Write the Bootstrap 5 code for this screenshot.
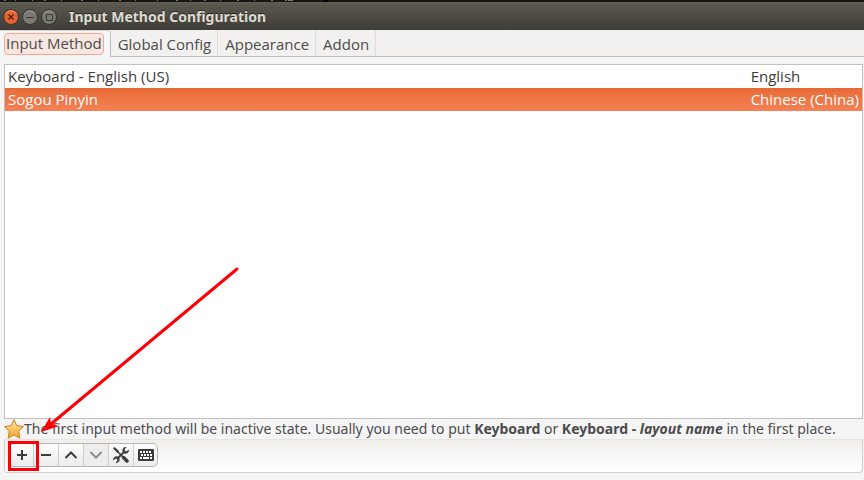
<!DOCTYPE html>
<html lang="en">
<head>
<meta charset="utf-8">
<meta name="viewport" content="width=device-width, initial-scale=1">
<title>Input Method Configuration</title>
<link href="https://cdn.jsdelivr.net/npm/bootstrap@5.3.0/dist/css/bootstrap.min.css" rel="stylesheet">
<style>
body { font-family: "Open Sans", "Noto Sans", sans-serif; font-size: 15px; line-height: 20px; color: #4c4c4c; background: #f5f5f6; }
.backdrop-strip { height: 2px; background: #161616; }
.backdrop-strip svg { display: block; }
.titlebar { height: 28px; padding: 0 3px; background: linear-gradient(#5b584c, #5a574e 2px, #3d3c36); border-top: 1px solid #63604f; }
.titlebar h1 { font-size: 14px; line-height: 20px; color: #dfdbd2; text-shadow: 0 -1px 0 #2a2925; padding-left: 9px; font-family: "Noto Sans", "Open Sans", sans-serif; }
.win-btn { width: 16px; height: 16px; margin-right: 3px; border: 0; padding: 0; background: none; }
.win-btn svg { display: block; overflow: visible; }
.tabs { height: 27px; border-bottom: 1px solid #c3beb9; background: #f2f1ef; }
.tabs .nav-link { height: 26px; padding: 4px 6px 0 7px; color: #4c4c4c; border: 0; border-right: 1px solid #dedbd8; border-radius: 0; line-height: 20px; }
.tabs .nav-link.active { height: 27px; padding: 2px 6px 0 4px; background: #f7f6f6; color: #4c4c4c; border-right: 1px solid #c3beb9; border-top: 1px solid #d5d1cd; border-radius: 0 4px 0 0; }
.focus-frame { display: block; height: 22px; line-height: 18px; padding: 0 1px; border: 1px solid #f4a88e; border-radius: 4px; background: #f8e6e1; }
.panes { padding: 7px 1px 7px 4px; }
.method-list { background: #fff; border: 1px solid #c3c0bd; }
.method-table { color: #3c3c3c; border-collapse: separate; border-spacing: 0; }
.method-table td { height: 23px; padding: 1px 3px 2px; line-height: 20px; border: 0; }
.method-table td:last-child { width: 114px; white-space: nowrap; }
.method-table .selected td { color: #fff; background: #ee7645; }
.method-table .selected { background: linear-gradient(#e0662f, #e86c38 1px, #f68155); }
.method-table .selected td { background: none; }
.hint { height: 20px; white-space: nowrap; font-family: "Noto Sans", "Open Sans", sans-serif; font-size: 14px; }
.hint svg { flex: none; }
.toolbox { height: 34px; padding: 3px 4px 4px; border: 1px solid #d3d1ce; border-top-color: #e7e5e2; border-radius: 0 0 4px 4px; background: linear-gradient(#efeeeb, #fff); }
.tool-group { border: 1px solid #b9b7b4; border-radius: 5px; overflow: hidden; background: linear-gradient(#fdfdfd, #ececeb); }
.tool-group .tool { width: 25px; height: 22px; padding: 0; border: 0; border-right: 1px solid #cfcdca; border-radius: 0; color: #3c3c3c; display: flex; align-items: center; justify-content: center; }
.tool-group .tool:first-child { width: 24px; }
.tool-group .tool:last-child { border-right: 0; width: 23px; }
.tool-group .tool:disabled { background: #eeedeb; color: #8b8b89; opacity: 1; }
.callout-arrow { position: absolute; left: 36px; bottom: 43px; pointer-events: none; }
.callout-frame { position: absolute; left: 8px; bottom: 9px; width: 31px; height: 30px; border: 3px solid #fb0007; pointer-events: none; }
</style>
<script src="https://cdn.jsdelivr.net/npm/bootstrap@5.3.0/dist/js/bootstrap.bundle.min.js"></script>
</head>
<body>
<div class="d-flex flex-column min-vh-100 position-relative overflow-hidden">
  <div class="backdrop-strip" aria-hidden="true">
    <svg width="364" height="2"><path d="M4 .5h2M15 .5h1M32 .5h1M44 .5h2M61 .5h1M81 .5h2M98 .5h1M119 .5h2M135 .5h1M157 .5h1M176 .5h2M190 .5h1M204 .5h2M220 .5h1M237 .5h2M254 .5h1M271 .5h2M285 .5h2M288 .5h5" stroke="#777" stroke-width="1"/><path d="M323 0h5v2h-5z" fill="#000"/></svg>
  </div>
  <header class="titlebar d-flex align-items-center">
    <button class="win-btn" type="button" aria-label="Close"><svg width="16" height="16"><circle cx="8" cy="8" r="7.5" fill="#e8602f" stroke="#33322d"/><path d="M2.5 5a6.3 6.3 0 0 1 11 0" fill="none" stroke="#f79a75"/><path d="M5.500 5.500l5 5m0-5l-5 5" stroke="#47200f" stroke-width="1.200"/></svg></button>
    <button class="win-btn" type="button" aria-label="Minimize"><svg width="16" height="16"><circle cx="8" cy="8" r="7.5" fill="#7b7971" stroke="#33322d"/><path d="M2.500 5a6.300 6.300 0 0 1 11 0" fill="none" stroke="#99978e"/><path d="M4.500 8.500h7" stroke="#3a3934"/></svg></button>
    <button class="win-btn" type="button" aria-label="Maximize"><svg width="16" height="16"><circle cx="8" cy="8" r="7.5" fill="#7b7971" stroke="#33322d"/><path d="M2.500 5a6.300 6.300 0 0 1 11 0" fill="none" stroke="#99978e"/><path d="M5.500 5.500h6v6h-6z" fill="none" stroke="#3a3934"/></svg></button>
    <h1 class="mb-0 fw-bold">Input Method Configuration</h1>
  </header>
  <nav class="tabs nav flex-nowrap">
    <a class="nav-link active" href="#methods" aria-current="page"><span class="focus-frame">Input Method</span></a>
    <a class="nav-link" href="#global">Global Config</a>
    <a class="nav-link" href="#appearance">Appearance</a>
    <a class="nav-link" href="#addon">Addon</a>
  </nav>
  <main class="panes flex-grow-1 d-flex flex-column" id="methods">
    <div class="method-list flex-grow-1">
      <table class="method-table w-100">
        <tbody>
          <tr><td>Keyboard - English (US)</td><td>English</td></tr>
          <tr class="selected" aria-selected="true"><td>Sogou Pinyin</td><td>Chinese (China)</td></tr>
        </tbody>
      </table>
    </div>
    <div class="hint d-flex align-items-center">
      <svg width="20" height="20" viewBox="0 0 20 20" aria-hidden="true"><defs><linearGradient id="gold" x2="0" y2="1"><stop stop-color="#ffe9a0"/><stop offset="1" stop-color="#f6a22c"/></linearGradient></defs><path d="M10 .7l2.800 6 6.700.800-4.900 4.700 1.300 7L10 16l-5.900 3.200 1.300-7L.5 7.500l6.700-.8z" fill="url(#gold)" stroke="#c8811c" stroke-linejoin="round"/></svg>
      <span>The first input method will be inactive state. Usually you need to put <b>Keyboard</b> or <b>Keyboard - <i>layout name</i></b> in the first place.</span>
    </div>
    <div class="toolbox d-flex align-items-start">
      <div class="tool-group d-flex" role="group" aria-label="Input method actions">
        <button class="btn tool" type="button" aria-label="Add"><svg width="14" height="14"><path d="M7 2v10M2 7h10" stroke="currentColor" stroke-width="2"/></svg></button>
        <button class="btn tool" type="button" aria-label="Remove"><svg width="14" height="14"><path d="M2 7h10" stroke="currentColor" stroke-width="2"/></svg></button>
        <button class="btn tool" type="button" aria-label="Move up"><svg width="14" height="14"><path d="M1.500 10L7 4.500l5.500 5.500" fill="none" stroke="currentColor" stroke-width="2"/></svg></button>
        <button class="btn tool" type="button" aria-label="Move down" disabled><svg width="14" height="14"><path d="M1.500 4L7 9.500 12.500 4" fill="none" stroke="currentColor" stroke-width="2"/></svg></button>
        <button class="btn tool" type="button" aria-label="Configure"><svg width="16" height="16" viewBox="0 0 16 16"><path d="M0 1.500L1.500 0l4.500 4-1.500 2z" fill="currentColor"/><path d="M4.500 4.500l5 5" stroke="currentColor" stroke-width="1.500"/><path d="M10.500 10.500l3.500 3.500" stroke="currentColor" stroke-width="3.500" stroke-linecap="round"/><path d="M4 12l8-8" stroke="currentColor" stroke-width="2"/><path d="M13.500 .2a3.300 3.300 0 0 0-3.900 4.400l1.800 1.800a3.300 3.300 0 0 0 4.400-3.900l-2.100 1.800-1.900-.100-.1-1.900zM2.500 15.800a3.300 3.300 0 0 0 3.900-4.400L4.600 9.600a3.300 3.300 0 0 0-4.400 3.900l2.100-1.800 1.900.100.1 1.900z" fill="currentColor"/></svg></button>
        <button class="btn tool" type="button" aria-label="Keyboard layout"><svg width="16" height="12" viewBox="0 0 16 12"><rect width="16" height="12" rx="1" fill="currentColor"/><path d="M2 3h12M3 6h11" stroke="#fff" stroke-width="2" stroke-dasharray="2 1" fill="none"/><path d="M2 9h2m1 0h6m1 0h2" stroke="#fff" stroke-width="2"/></svg></button>
      </div>
    </div>
  </main>
  <svg class="callout-arrow" width="204" height="170" viewBox="0 0 204 170" aria-hidden="true"><path d="M201 2L15 157" stroke="#fb0007" stroke-width="3" stroke-linecap="round"/><path d="M5 165l9-15 1 7 8 2z" fill="#fb0007"/></svg>
  <div class="callout-frame" aria-hidden="true"></div>
</div>
</body>
</html>
